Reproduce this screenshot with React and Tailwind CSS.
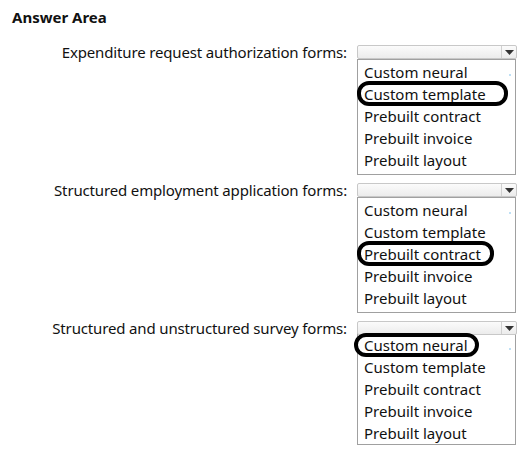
const OPTIONS = ['Custom neural', 'Custom template', 'Prebuilt contract', 'Prebuilt invoice', 'Prebuilt layout'];

const QUESTIONS = [
  { label: 'Expenditure request authorization forms:', answer: 1, pad: 'pt-px pb-[3px]', ring: 'left-[-1px] w-[151px] top-[-2px] h-[25px]' },
  { label: 'Structured employment application forms:', answer: 2, pad: 'pt-px pb-[3px]', ring: 'left-[-1px] w-[137px] top-[-2px] h-[25px]' },
  { label: 'Structured and unstructured survey forms:', answer: 0, pad: 'pt-0 pb-0 -mt-[2px]', ring: 'left-[-4px] w-[125px] top-[-1px] h-[24px]' },
];

const Dropdown = ({ answer, ring, pad }) => (
  <div className="w-[160px]">
    {/* select box */}
    <div className="relative z-10 h-[14px] flex rounded-[2px] border border-[#c8c8c8] bg-gradient-to-b from-[#fbfbfb] to-[#ececec]">
      <div className="flex-1" />
      <div className="w-[15px] border-l border-[#d0d0d0] flex items-center justify-center">
        <svg width="9" height="5" viewBox="0 0 9 5">
          <path d="M0 0 H9 L4.5 5 Z" fill="#333" />
        </svg>
      </div>
    </div>
    {/* list */}
    <div className={`relative w-[159px] border border-[#a0a0a0] bg-white ${pad}`}>
      <div className="absolute right-[4px] top-[14px] w-[2px] h-[2px] bg-[#bfe0f5]" />
      {OPTIONS.map((opt, i) => (
        <div key={opt} className="relative z-20 h-[22px] pl-[6px] flex items-center text-[15px] leading-none text-[#111]">
          {opt}
          {i === answer && (
            <div className={`absolute ${ring} border-[4px] border-black rounded-[12px]`} />
          )}
        </div>
      ))}
    </div>
  </div>
);

export default function App() {
  return (
    <div className="w-[526px] h-[460px] bg-white pt-[8px] font-['Segoe_UI','Noto_Sans',sans-serif] text-[#111]">
      <div className="pl-[12px] text-[15px] font-bold leading-[18px]">Answer Area</div>
      <div className="mt-[19px] flex flex-col gap-[8px]">
        {QUESTIONS.map((q) => (
          <div key={q.label} className="flex items-start">
            <div className="w-[347px] text-right text-[15px] leading-[14px] tracking-[-0.15px]">{q.label}</div>
            <div className="ml-[10px]">
              <Dropdown answer={q.answer} ring={q.ring} pad={q.pad} />
            </div>
          </div>
        ))}
      </div>
    </div>
  );
}
